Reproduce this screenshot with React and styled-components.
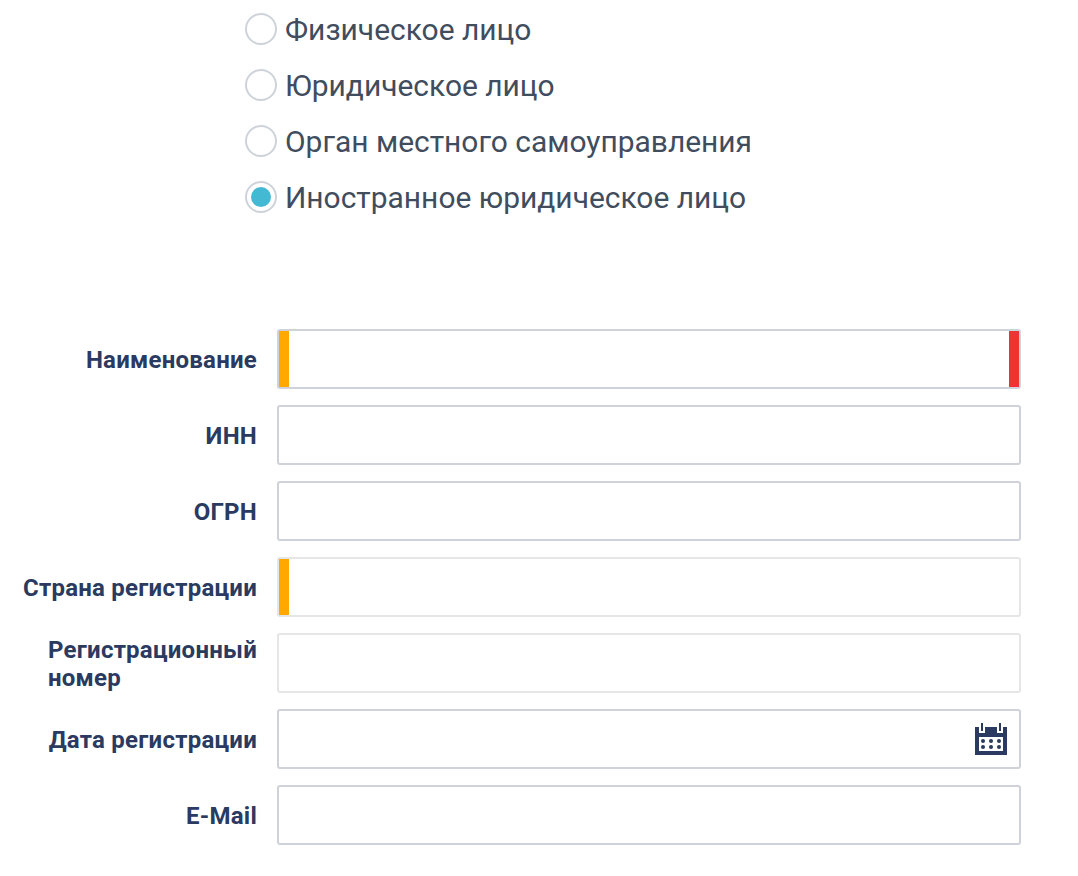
import React from "react";
import styled, { createGlobalStyle } from "styled-components";

const Global = createGlobalStyle`
  html, body { margin: 0; padding: 0; background: #fff; }
  body { font-family: Roboto, "Liberation Sans", sans-serif; }
`;

const Page = styled.div`
  width: 1078px;
  height: 876px;
  overflow: hidden;
  padding-top: 1px;
  box-sizing: border-box;
`;

const RadioGroup = styled.div`
  display: flex;
  flex-direction: column;
  padding-left: 245px;
  margin-bottom: 104px;
`;

const RadioRow = styled.label`
  display: flex;
  align-items: center;
  height: 56px;
  gap: 8px;
  font-size: 29.95px;
  color: #3f4d5e;
`;

const RadioCircle = styled.span`
  width: 32px;
  height: 32px;
  box-sizing: border-box;
  border: 2px solid #ced3da;
  border-radius: 50%;
  display: flex;
  align-items: center;
  justify-content: center;
  background: #fff;
`;

const RadioDot = styled.span`
  width: 20px;
  height: 20px;
  border-radius: 50%;
  background: #43b9d4;
`;

const Form = styled.div`
  display: grid;
  grid-template-columns: 257px 744px;
  column-gap: 20px;
  row-gap: 16px;
`;

const LabelCell = styled.div`
  display: flex;
  justify-content: flex-end;
  align-items: center;
`;

const Label = styled.span`
  font-size: 24px;
  font-weight: 700;
  letter-spacing: 0.24px;
  line-height: 28px;
  color: #2a3a60;
  text-align: left;
  padding-top: 2px;
`;

const Field = styled.div`
  height: 60px;
  box-sizing: border-box;
  border: 2px solid ${(p) => (p.$light ? "#e5e6e8" : "#cfd3d9")};
  border-radius: 3px;
  background: #fff;
  display: flex;
  align-items: stretch;
  justify-content: space-between;
`;

const Marker = styled.span`
  width: 10px;
  background: ${(p) => p.$color};
  margin-left: ${(p) => (p.$end ? "auto" : "0")};
`;

const IconSlot = styled.span`
  margin-left: auto;
  padding-right: 12px;
  display: flex;
  align-items: center;
`;

const CalendarIcon = () => (
  <svg width="32" height="32" viewBox="0 0 32 32">
    <path
      fill="#2a3a60"
      fillRule="evenodd"
      d="M0 4h4v6h6V4h12v6h6V4h4v28H0zM4 14v14h24V14z"
    />
    <rect x="6" y="0" width="2" height="8" fill="#2a3a60" />
    <rect x="24" y="0" width="2" height="8" fill="#2a3a60" />
    {[8, 16, 24].map((x) =>
      [18, 24].map((y) => <circle key={`${x}-${y}`} cx={x} cy={y} r="2" fill="#2a3a60" />)
    )}
  </svg>
);

const radios = [
  { text: "Физическое лицо" },
  { text: "Юридическое лицо" },
  { text: "Орган местного самоуправления" },
  { text: "Иностранное юридическое лицо", checked: true },
];

const fields = [
  { label: "Наименование", left: true, right: true },
  { label: "ИНН" },
  { label: "ОГРН" },
  { label: "Страна регистрации", left: true, light: true },
  { label: <>Регистрационный<br />номер</>, light: true },
  { label: "Дата регистрации", calendar: true },
  { label: "E-Mail" },
];

export default function App() {
  return (
    <Page>
      <Global />
      <RadioGroup>
        {radios.map((r) => (
          <RadioRow key={r.text}>
            <RadioCircle>{r.checked && <RadioDot />}</RadioCircle>
            {r.text}
          </RadioRow>
        ))}
      </RadioGroup>
      <Form>
        {fields.map((f, i) => (
          <React.Fragment key={i}>
            <LabelCell>
              <Label>{f.label}</Label>
            </LabelCell>
            <Field $light={f.light}>
              {f.left && <Marker $color="#ffa800" />}
              {f.right && <Marker $color="#ec3433" $end />}
              {f.calendar && (
                <IconSlot>
                  <CalendarIcon />
                </IconSlot>
              )}
            </Field>
          </React.Fragment>
        ))}
      </Form>
    </Page>
  );
}
